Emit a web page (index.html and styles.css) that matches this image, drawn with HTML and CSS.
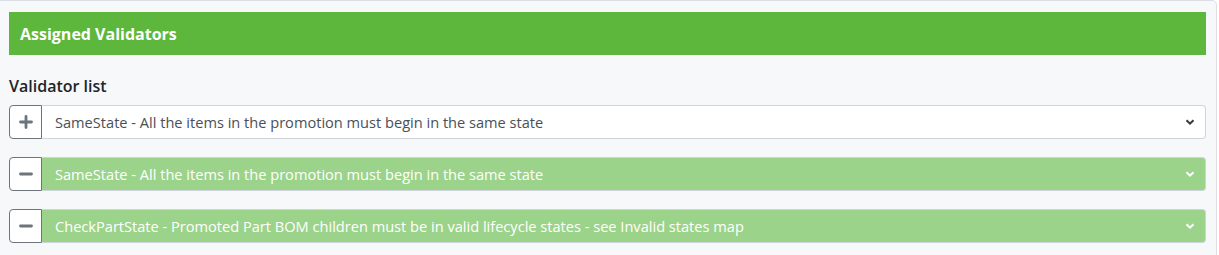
FILE: index.html
```html
<!DOCTYPE html>
<html>
<head>
<meta charset="utf-8">
<link rel="stylesheet" href="styles.css">
</head>
<body>
<div class="card">
  <div class="card-header">Assigned Validators</div>
  <div class="card-body">
    <div class="label">Validator list</div>
    <div class="rows">
      <div class="input-group">
        <button class="btn"><svg width="14" height="14" viewBox="0 0 14 14"><path d="M7 1.5v11M1.5 7h11" stroke="#6c757d" stroke-width="2.8" stroke-linecap="round"/></svg></button>
        <div class="select">
          <span>SameState - All the items in the promotion must begin in the same state</span>
          <svg class="chev" width="10" height="8" viewBox="0 0 10 8"><path d="M1.5 2.2l3.5 3.5 3.5-3.5" fill="none" stroke="#343a40" stroke-width="2"/></svg>
        </div>
      </div>
      <div class="input-group">
        <button class="btn"><svg width="14" height="14" viewBox="0 0 14 14"><path d="M1.5 7h11" stroke="#6c757d" stroke-width="2.8" stroke-linecap="round"/></svg></button>
        <div class="select ok">
          <span>SameState - All the items in the promotion must begin in the same state</span>
          <svg class="chev" width="10" height="8" viewBox="0 0 10 8"><path d="M1.5 2.2l3.5 3.5 3.5-3.5" fill="none" stroke="#ffffff" stroke-width="2"/></svg>
        </div>
      </div>
      <div class="input-group">
        <button class="btn"><svg width="14" height="14" viewBox="0 0 14 14"><path d="M1.5 7h11" stroke="#6c757d" stroke-width="2.8" stroke-linecap="round"/></svg></button>
        <div class="select ok">
          <span>CheckPartState - Promoted Part BOM children must be in valid lifecycle states - see Invalid states map</span>
          <svg class="chev" width="10" height="8" viewBox="0 0 10 8"><path d="M1.5 2.2l3.5 3.5 3.5-3.5" fill="none" stroke="#ffffff" stroke-width="2"/></svg>
        </div>
      </div>
    </div>
  </div>
</div>
</body>
</html>
```

FILE: styles.css
```css
html, body {
  margin: 0;
  padding: 0;
  background: #ffffff;
}
body {
  font-family: "Open Sans", "Noto Sans", sans-serif;
  color: #212529;
}
.card {
  margin: 0 2px 0 -1px;
  height: 260px;
  box-sizing: border-box;
  background: #f7f8fa;
  border: 1px solid #dcdfe3;
  border-top-right-radius: 5px;
  padding: 11px 10px 0 9px;
}
.card-header {
  background: #5cb73c;
  color: #ffffff;
  font-weight: 700;
  font-size: 16px;
  height: 43px;
  display: flex;
  align-items: center;
  padding-left: 11px;
}
.card-body {
  padding-top: 20px;
}
.label {
  font-size: 16px;
  font-weight: 600;
  line-height: 22px;
  color: #212529;
  margin-bottom: 8px;
}
.rows {
  display: flex;
  flex-direction: column;
  gap: 18px;
}
.input-group {
  display: flex;
  height: 34px;
}
.btn {
  width: 33px;
  flex: none;
  margin: 0;
  padding: 0;
  border: 1px solid #6c757d;
  border-radius: 4px 0 0 4px;
  background: #ffffff;
  display: flex;
  align-items: center;
  justify-content: center;
}
.select {
  flex: 1;
  display: flex;
  align-items: center;
  justify-content: space-between;
  background: #ffffff;
  border: 1px solid #ced4da;
  border-left: none;
  border-radius: 0 4px 4px 0;
  padding: 0 10px 0 13px;
  font-size: 14.6px;
  color: #495057;
}
.select.ok {
  background: #9bd38a;
  color: #ffffff;
}
.chev {
  flex: none;
}
```
